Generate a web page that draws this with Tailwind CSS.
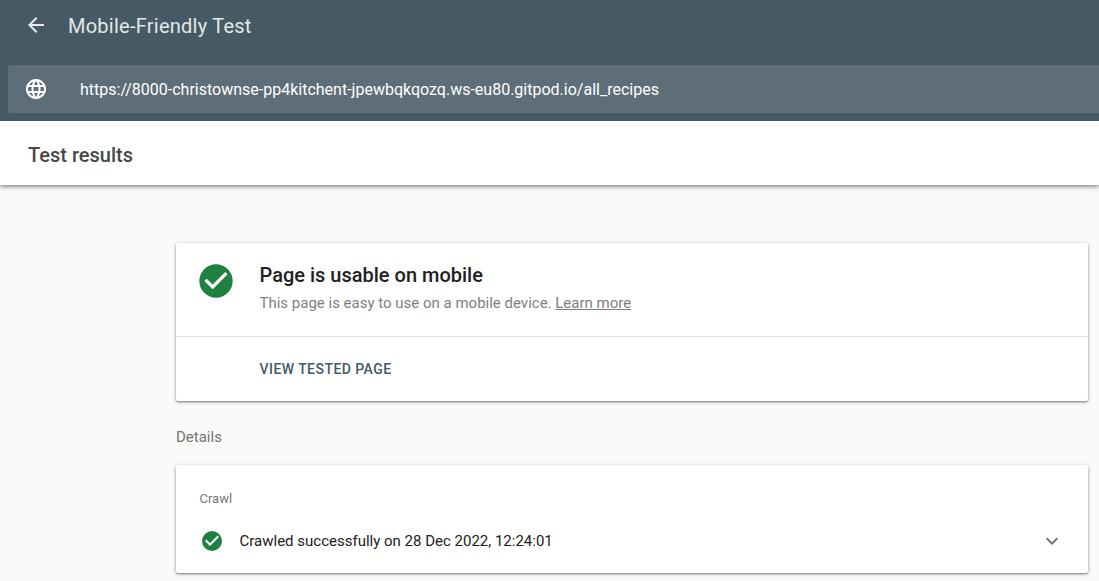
<!DOCTYPE html>
<html lang="en"><head><meta charset="utf-8"><title>Mobile-Friendly Test</title>
<script src="https://cdn.jsdelivr.net/npm/@tailwindcss/browser@4"></script></head>
<body class="w-[1099px] h-[581px] overflow-hidden bg-[#fafafa] font-['Roboto',sans-serif]">
<header class="relative z-10 h-[121px] bg-[#455a64] text-white">
<div class="h-[65px] flex items-start pl-6 pt-[13px]">
<svg class="size-6 mr-5 shrink-0" viewBox="0 0 24 24" fill="#e7eaec"><path d="M20 11H7.83l5.59-5.59L12 4l-8 8 8 8 1.41-1.41L7.83 13H20z"/></svg>
<h1 class="text-[20px] leading-[27px] tracking-[0.25px] text-[#e3e7e9]">Mobile-Friendly Test</h1>
</div>
<div class="ml-2 h-12 rounded-l-xs bg-[#5d6e78] flex items-center pl-4">
<svg class="size-6 mr-8 shrink-0" viewBox="0 0 24 24" fill="currentColor"><path d="M11.99 2C6.47 2 2 6.48 2 12s4.47 10 9.99 10C17.52 22 22 17.52 22 12S17.52 2 11.99 2zm6.93 6h-2.95a15.65 15.65 0 0 0-1.38-3.56A8.03 8.03 0 0 1 18.92 8zM12 4.04c.83 1.2 1.48 2.53 1.91 3.96h-3.82c.43-1.43 1.08-2.76 1.91-3.96zM4.26 14C4.1 13.36 4 12.69 4 12s.1-1.36.26-2h3.38c-.08.66-.14 1.32-.14 2s.06 1.34.14 2H4.26zm.82 2h2.95c.32 1.25.78 2.45 1.38 3.56A7.99 7.99 0 0 1 5.08 16zm2.95-8H5.08a7.99 7.99 0 0 1 4.33-3.56A15.65 15.65 0 0 0 8.03 8zM12 19.96c-.83-1.2-1.48-2.53-1.91-3.96h3.82c-.43 1.43-1.08 2.76-1.91 3.96zM14.34 14H9.66c-.09-.66-.16-1.32-.16-2s.07-1.35.16-2h4.68c.09.65.16 1.32.16 2s-.07 1.34-.16 2zm.25 5.56c.6-1.11 1.06-2.31 1.38-3.56h2.95a8.03 8.03 0 0 1-4.33 3.56zM16.36 14c.08-.66.14-1.32.14-2s-.06-1.34-.14-2h3.38c.16.64.26 1.31.26 2s-.1 1.36-.26 2h-3.38z"/></svg>
<span class="pt-0.5 text-[16px]">https://8000-christownse-pp4kitchent-jpewbqkqozq.ws-eu80.gitpod.io/all_recipes</span>
</div>
</header>
<div class="h-16 bg-white pl-7 pt-[21px] shadow-[0_1px_5px_rgba(0,0,0,0.6)]"><h2 class="text-[20px] leading-[26px] font-medium text-[#484848]">Test results</h2></div>
<main class="ml-[176px] w-[912px] pt-[58px]">
<section class="h-[158px] rounded-xs bg-white shadow-[0_1px_2px_rgba(0,0,0,0.4),0_1px_4px_rgba(0,0,0,0.2)]">
<div class="h-[94px] flex border-b border-[#e0e0e0] pl-[19.5px] pt-[18px]">
<svg class="size-10 mr-6 shrink-0" viewBox="0 0 24 24"><circle cx="12" cy="12" r="10" fill="#1e8141"/><path fill="#fff" d="M10 17l-5-5 1.41-1.41L10 14.17l7.59-7.59L19 8z"/></svg>
<div><h3 class="text-[20px] leading-7 font-medium text-[#212121]">Page is usable on mobile</h3>
<p class="mt-1 text-[15px] leading-5 text-[#808080]">This page is easy to use on a mobile device. <a class="underline">Learn more</a></p></div>
</div>
<div class="h-16 flex items-center pl-[83.5px] text-[14px] tracking-[0.45px] font-medium text-[#455a64]">VIEW TESTED PAGE</div>
</section>
<div class="h-[64px] pt-[26px] text-[15px] leading-5 text-[#757575]">Details</div>
<section class="h-[108px] rounded-xs bg-white shadow-[0_1px_2px_rgba(0,0,0,0.4),0_1px_4px_rgba(0,0,0,0.2)] pl-[23.5px] pt-6">
<div class="text-[13px] leading-5 text-[#757575]">Crawl</div>
<div class="mt-5 flex items-center text-[15px] leading-6 text-[#212121]">
<svg class="size-6 mr-4" viewBox="0 0 24 24"><circle cx="12" cy="12" r="10" fill="#1e8141"/><path fill="#fff" d="M10 17l-5-5 1.41-1.41L10 14.17l7.59-7.59L19 8z"/></svg>
<span>Crawled successfully on 28 Dec 2022, 12:24:01</span>
<svg class="ml-auto mr-[24.5px] size-6" viewBox="0 0 24 24" fill="#757575"><path d="M7.41 8.59 12 13.17l4.59-4.58L18 10l-6 6-6-6z"/></svg>
</div>
</section>
</main>
</body></html>
